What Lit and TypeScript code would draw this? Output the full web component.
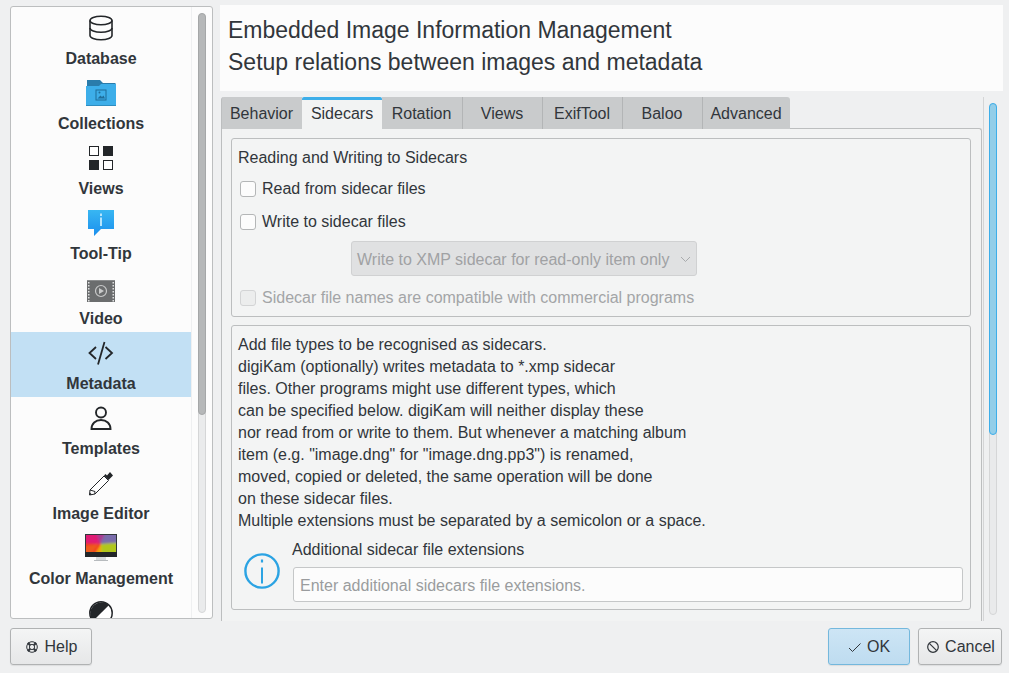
import { LitElement, html, css, svg } from "lit";
import { customElement } from "lit/decorators.js";

const ink = "#232629";
const icons: Record<string, unknown> = {
  db: svg`<svg width="32" height="32" viewBox="0 0 32 32" fill="none" stroke="${ink}" stroke-width="1.6"><ellipse cx="16" cy="8.5" rx="11" ry="4.2"/><path d="M5 8.5v15c0 2.3 4.9 4.2 11 4.2s11-1.9 11-4.2v-15"/><path d="M5 16c0 2.3 4.9 4.2 11 4.2S27 18.300 27 16"/></svg>`,
  folder: svg`<svg width="32" height="32" viewBox="0 0 32 32"><path d="M2 3h13l3 3h12.500v5H2z" fill="#2a7cab"/><path d="M1 9h13l2-2h15v22H1z" fill="#3daee9"/><rect x="1" y="28" width="30" height="1" fill="#2f8dc0"/><rect x="11" y="13" width="10" height="10" fill="none" stroke="#1f6d9a" stroke-width="1"/><path d="M12.500 21.500l3-3 1.500 1.500 1.500-1.500 1.500 3z" fill="#1f6d9a"/><circle cx="14.500" cy="15.500" r="1" fill="#1f6d9a"/></svg>`,
  views: svg`<svg width="32" height="32" viewBox="0 0 32 32"><rect x="4.500" y="4.500" width="9" height="9" fill="#fff" stroke="${ink}"/><rect x="18" y="4" width="10" height="10" fill="${ink}"/><rect x="4" y="18" width="10" height="10" fill="${ink}"/><rect x="18.500" y="18.500" width="9" height="9" fill="#fff" stroke="${ink}"/></svg>`,
  tip: svg`<svg width="32" height="32" viewBox="0 0 32 32"><defs><linearGradient id="tg" x1="0" y1="0" x2="0" y2="1"><stop offset="0" stop-color="#38b6f2"/><stop offset="1" stop-color="#1b8fee"/></linearGradient></defs><path d="M3 3h26v19H16l-7 7v-7H3z" fill="url(#tg)"/><rect x="15" y="6.500" width="2" height="2.500" fill="#b6e4fb"/><rect x="15" y="10.500" width="2" height="8.500" fill="#b6e4fb"/></svg>`,
  video: svg`<svg width="32" height="32" viewBox="0 0 32 32"><rect x="2" y="8" width="28" height="22" fill="#6b6d6e"/><rect x="2" y="8" width="28" height="1" fill="#8b8d8e"/><g fill="#e0e1e1">${[10, 13, 16, 19, 22, 25, 28].map((y) => svg`<rect x="3" y="${y}" width="1.500" height="1.500"/><rect x="27.500" y="${y}" width="1.500" height="1.500"/>`)}</g><circle cx="16" cy="19" r="5.500" fill="none" stroke="#c9caca" stroke-width="1.200"/><path d="M14 16l5 3-5 3z" fill="#c9caca"/></svg>`,
  code: svg`<svg width="32" height="32" viewBox="0 0 32 32" fill="none" stroke="${ink}" stroke-width="1.800"><path d="M11 10l-6.500 6 6.500 6M20.500 10l6.500 6-6.500 6"/><path d="M19.500 5L13 27.500"/></svg>`,
  person: svg`<svg width="32" height="32" viewBox="0 0 32 32" fill="none" stroke="${ink}" stroke-width="1.900"><circle cx="16" cy="10.500" r="5"/><path d="M6.500 27c0-5.500 4-9 9.500-9s9.500 3.500 9.500 9z"/></svg>`,
  pencil: svg`<svg width="32" height="32" viewBox="0 0 32 32"><path d="M19 9l4.500 4.500L10 27 4.500 28l.5-5z" fill="#fff" stroke="${ink}" stroke-width="1"/><path d="M25 5l3 3.500-4.500 4.500-4.500-4.500 1.500-1.500 1.500 1.500z" fill="${ink}"/><path d="M5 23l5 1.500-.2 2.500" stroke="${ink}" fill="none"/><path d="M4.500 28l.4-2.500 2 2z" fill="${ink}"/></svg>`,
  color: svg`<svg width="32" height="32" viewBox="0 0 32 32"><defs><filter id="bl" x="-10%" y="-10%" width="120%" height="120%"><feGaussianBlur stdDeviation="1.300"/></filter><clipPath id="sc"><rect x="1" y="3" width="30" height="17"/></clipPath></defs><rect x="0" y="2" width="32" height="23" fill="#31363b"/><rect x="11" y="25" width="10" height="3" fill="#d6dadc"/><rect x="9" y="28" width="14" height="1" fill="#b7bbbe"/><g clip-path="url(#sc)"><g filter="url(#bl)"><rect x="-2" y="0" width="36" height="23" fill="#cfc80f"/><polygon points="-2,0 16,0 16,23 -2,23" fill="#f0351f"/><polygon points="-2,0 14,0 15,12 -2,11" fill="#e01c74"/><polygon points="15,0 34,0 34,11 16,12" fill="#7a6cab"/><polygon points="16,12 34,11 34,23 17,23" fill="#b0c71c"/><polygon points="16,12 16,23 9,23" fill="#f4a20f"/><polygon points="-2,23 -2,14 14,12 6,23" fill="#ef5a1a"/><polygon points="15,12 21,0 11,0" fill="#a93c92"/></g></g><rect x="0" y="20" width="32" height="5" fill="#232629"/></svg>`,
  half: svg`<svg width="32" height="32" viewBox="0 0 32 32"><circle cx="16" cy="16" r="11.200" fill="#fff" stroke="${ink}" stroke-width="1.500"/><path d="M24.100 7.900A11.500 11.500 0 0 0 7.900 24.100z" fill="${ink}"/></svg>`,
};

const items = [
  ["db", "Database"], ["folder", "Collections"], ["views", "Views"], ["tip", "Tool-Tip"], ["video", "Video"],
  ["code", "Metadata"], ["person", "Templates"], ["pencil", "Image Editor"], ["color", "Color Management"], ["half", ""],
];
const tabs = ["Behavior", "Sidecars", "Rotation", "Views", "ExifTool", "Baloo", "Advanced"];

@customElement("app-root")
export class AppRoot extends LitElement {
  static styles = css`
    :host { display: block; width: 1009px; height: 673px; background: #eff0f1; color: #31363b;
      font: 16px/22px "Liberation Sans", Arial, sans-serif; overflow: hidden; }
    * { box-sizing: border-box; }
    .main { display: flex; height: 621px; }
    .side { width: 203px; height: 613px; margin: 6px 0 0 10px; background: #fcfcfc; border: 1px solid #bcbebf;
      border-radius: 3px; display: flex; overflow: hidden; flex: none; }
    .list { width: 181px; height: 100%; overflow: hidden; border-right: 1px solid #eff0f1; flex: none; }
    .item { height: 65px; display: flex; flex-direction: column; align-items: center; padding-top: 5px; }
    .item.sel { background: #c2e0f4; }
    .ico { width: 32px; height: 32px; flex: none; }
    .ico svg { display: block; }
    .lab { font-weight: 700; line-height: 18px; margin-top: 6px; white-space: nowrap; }
    .vtrack { width: 20px; padding: 6px 0 5px 6px; flex: none; }
    .track { width: 8px; height: 100%; border: 1px solid #d5d6d7; border-radius: 4px; background: #eaebec; }
    .thumb { width: 8px; height: 402px; margin: -1px; background: #b6b8b9; border: 1px solid #a5a7a8; border-radius: 4px; }
    .right { width: 783px; margin-left: 7px; flex: none; display: flex; flex-direction: column; }
    .head { margin-top: 5px; height: 86px; background: #fcfcfc; padding: 9px 8px 0; font-size: 23px; line-height: 32px; flex: none; white-space: nowrap; }
    .body { margin-top: 6px; flex: 1; display: flex; min-height: 0; }
    .tabwrap { width: 761px; margin-left: 1px; flex: none; display: flex; flex-direction: column; overflow: hidden; }
    .tabs { display: flex; height: 32px; flex: none; position: relative; z-index: 1; }
    .tab { width: 80px; height: 32px; background: #c9cbcc; border-left: 1px solid #b3b5b6; padding-right: 1px; text-align: center; line-height: 34px; white-space: nowrap; }
    .tab:first-child { width: 81px; border-left-color: #bcbebf; border-top-left-radius: 3px; }
    .tab:last-child { width: 88px; border-top-right-radius: 3px; }
    .tab.on { background: #f2f3f3; border-top: 3px solid #3daee9; border-left: 0; line-height: 27px; height: 33px; padding-right: 0; border-radius: 2px 2px 0 0; }
    .tab.on + .tab { border-left: 0; }
    .pane { flex: 1; margin-top: -1px; border: 1px solid #bcbebf; border-radius: 0 3px 0 0; border-bottom: 0; background: #f2f3f3; padding: 9px 10px 0 9px; }
    .group { border: 1px solid #bcbebf; border-radius: 3px; background: #f3f4f4; }
    .g1 { height: 179px; padding: 8px 6px; }
    .g2 { height: 285px; margin-top: 8px; padding: 7px 6px; }
    .row { display: flex; align-items: center; height: 22px; padding-left: 2px; gap: 6px; white-space: nowrap; }
    .r1 { margin-top: 9px; } .r2 { margin-top: 11px; } .r3 { margin-top: 11px; }
    .cb { width: 16px; height: 16px; border: 1px solid #b4b6b7; border-radius: 3px; background: #fcfcfc; flex: none; }
    .off { color: #a3a5a7; }
    .off .cb { background: #eceded; border-color: #d3d4d5; }
    .combo { margin: 8px 0 0 113px; width: 346px; height: 35px; background: #e0e1e2; border: 1px solid #d0d1d2; border-radius: 3px;
      display: flex; align-items: center; justify-content: space-between; padding: 2px 4px 0 5px; color: #a0a2a4; white-space: nowrap; }
    .combo svg { display: block; margin-top: -2px; }
    .text { padding-top: 1px; }
    .form { display: flex; margin-top: 7px; }
    .info { width: 54px; flex: none; padding: 14px 0 0 6px; }
    .info svg { display: block; }
    .fcol { flex: 1; }
    .input { margin: 6px 0 0 1px; width: 670px; height: 35px; background: #fcfcfc; border: 1px solid #c5c7c8; border-radius: 3px;
      padding: 1px 6px 0; line-height: 33px; color: #9a9c9e; white-space: nowrap; }
    .vsep { width: 1px; margin-left: 1px; background: #d4d5d6; flex: none; }
    .vbar { width: 8px; margin-left: 5px; padding: 6px 0; flex: none; display: flex; }
    .bt { width: 8px; height: 100%; background: #e9eaeb; border: 1px solid #d5d6d7; border-radius: 4px; }
    .bthumb { width: 8px; height: 332px; margin: -1px; background: #93cee9; border: 1px solid #3daee9; border-radius: 4px; }
    .foot { display: flex; padding: 7px 7px 0 10px; gap: 8px; }
    .btn { height: 37px; border: 1px solid #b0b2b3; border-radius: 3px; background: linear-gradient(#f4f5f5, #e6e7e8); display: flex;
      align-items: center; justify-content: center; gap: 6px; padding-top: 1px; white-space: nowrap; box-shadow: 0 1px 1px rgba(0,0,0,.08); }
    .btn svg { display: block; flex: none; }
    .help { width: 82px; margin-right: auto; }
    .ok { width: 82px; padding-right: 1px; background: linear-gradient(#cde5f5, #bedcf0); border-color: #74b8dd; }
    .cancel { width: 84px; }
  `;

  render() {
    return html`
      <div class="main">
        <div class="side">
          <div class="list">
            ${items.map(([k, l]) => html`<div class="item ${l === "Metadata" ? "sel" : ""}"><div class="ico">${icons[k]}</div>${l ? html`<div class="lab">${l}</div>` : ""}</div>`)}
          </div>
          <div class="vtrack"><div class="track"><div class="thumb"></div></div></div>
        </div>
        <div class="right">
          <div class="head">Embedded Image Information Management<br />Setup relations between images and metadata</div>
          <div class="body">
            <div class="tabwrap">
              <div class="tabs">${tabs.map((t) => html`<div class="tab ${t === "Sidecars" ? "on" : ""}">${t}</div>`)}</div>
              <div class="pane">
                <div class="group g1">
                  <div>Reading and Writing to Sidecars</div>
                  <div class="row r1"><span class="cb"></span>Read from sidecar files</div>
                  <div class="row r2"><span class="cb"></span>Write to sidecar files</div>
                  <div class="combo">Write to XMP sidecar for read-only item only
                    <svg width="14" height="14" viewBox="0 0 14 14" fill="none" stroke="#a9abad"><path d="M3 5l4.500 4.500L12 5"/></svg></div>
                  <div class="row r3 off"><span class="cb"></span>Sidecar file names are compatible with commercial programs</div>
                </div>
                <div class="group g2">
                  <div class="text">Add file types to be recognised as sidecars.<br />
                    digiKam (optionally) writes metadata to *.xmp sidecar<br />
                    files. Other programs might use different types, which<br />
                    can be specified below. digiKam will neither display these<br />
                    nor read from or write to them. But whenever a matching album<br />
                    item (e.g. "image.dng" for "image.dng.pp3") is renamed,<br />
                    moved, copied or deleted, the same operation will be done<br />
                    on these sidecar files.<br />
                    Multiple extensions must be separated by a semicolon or a space.</div>
                  <div class="form">
                    <div class="info"><svg width="36" height="36" viewBox="0 0 36 36" fill="none" stroke="#2ba3e3" stroke-width="2.400"><circle cx="18" cy="18" r="16.600"/><path d="M18 14.500v16" stroke-width="2"/><path d="M18 6.500v3" stroke-width="2.200"/></svg></div>
                    <div class="fcol"><div>Additional sidecar file extensions</div><div class="input">Enter additional sidecars file extensions.</div></div>
                  </div>
                </div>
              </div>
            </div>
            <div class="vsep"></div>
            <div class="vbar"><div class="bt"><div class="bthumb"></div></div></div>
          </div>
        </div>
      </div>
      <div class="foot">
        <div class="btn help"><svg width="14" height="14" viewBox="0 0 14 14" fill="none" stroke="#31363b" stroke-width="1"><circle cx="7" cy="7" r="5.300"/><circle cx="7" cy="7" r="2.600"/><path d="M2.800 2.800l2.400 2.400M11.200 2.800L8.800 5.200M2.800 11.200l2.400-2.400M11.200 11.200L8.800 8.800" stroke-width="2.200"/></svg>Help</div>
        <div class="btn ok"><svg width="14" height="14" viewBox="0 0 14 14" fill="none" stroke="#31363b" stroke-width="1"><path d="M2 8l3.500 3.500L13.500 3.500"/></svg>OK</div>
        <div class="btn cancel"><svg width="14" height="14" viewBox="0 0 14 14" fill="none" stroke="#31363b" stroke-width="1.200"><circle cx="8" cy="7" r="5.300"/><path d="M4.300 3.300l7.400 7.400"/></svg>Cancel</div>
      </div>
    `;
  }
}
